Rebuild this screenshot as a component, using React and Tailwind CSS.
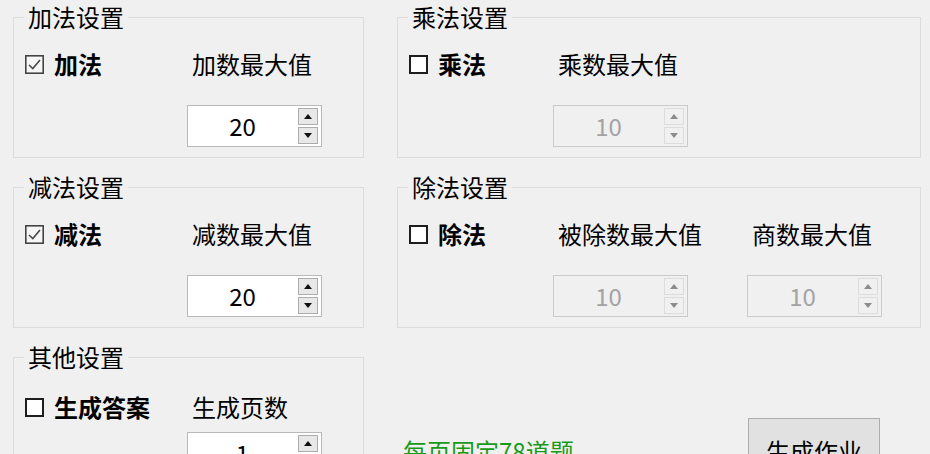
const font = "font-['Noto_Sans_CJK_SC','Noto_Sans',sans-serif]";

function CheckBox({ checked }) {
  if (checked) {
    return (
      <svg width="19" height="19" viewBox="0 0 19 19" className="shrink-0">
        <rect x="0.8" y="0.8" width="17.4" height="17.4" fill="#f6f6f6" stroke="#444" strokeWidth="1.6" />
        <path d="M4 10 L7.8 13.6 L15 5" fill="none" stroke="#4a4a4a" strokeWidth="1.6" />
      </svg>
    );
  }
  return (
    <svg width="19" height="19" viewBox="0 0 19 19" className="shrink-0">
      <rect x="1" y="1" width="17" height="17" fill="#fff" stroke="#1e1e1e" strokeWidth="2" />
    </svg>
  );
}

function Arrow({ up, color }) {
  return (
    <svg width="8" height="5" viewBox="0 0 8 5">
      <path d={up ? "M0 5 L4 0 L8 5 Z" : "M0 0 L4 5 L8 0 Z"} fill={color} />
    </svg>
  );
}

function Spinner({ value, disabled }) {
  const btn = disabled
    ? "bg-[#f0f0f0] border-[#dcdcdc]"
    : "bg-[#e8e8e8] border-[#adadad]";
  const arrow = disabled ? "#8c8c8c" : "#111";
  return (
    <div
      className={`flex h-[42px] w-[135px] border ${
        disabled ? "border-[#cacaca] bg-[#f0f0f0]" : "border-[#b9b9b9] bg-white"
      }`}
    >
      <div
        className={`flex-1 flex items-center justify-center text-[24px] leading-none ${
          disabled ? "text-[#a3a3a3]" : "text-black"
        }`}
      >
        {value}
      </div>
      <div className="w-[20px] ml-[1px] mr-[3px] pt-[2px] flex flex-col gap-[2px]">
        <div className={`h-[17px] border flex items-center justify-center ${btn}`}>
          <Arrow up color={arrow} />
        </div>
        <div className={`h-[17px] border flex items-center justify-center ${btn}`}>
          <Arrow color={arrow} />
        </div>
      </div>
    </div>
  );
}

function Group({ title, children }) {
  return (
    <fieldset className="border border-[#dcdcdc] min-w-0">
      <legend className="ml-[10px] px-[4px] text-[24px] leading-[30px] text-black">{title}</legend>
      {children}
    </fieldset>
  );
}

function Toggle({ checked, label }) {
  return (
    <div className="flex items-center gap-[10px] h-[30px]">
      <CheckBox checked={checked} />
      <span className="text-[24px] leading-[30px] font-bold text-black">{label}</span>
    </div>
  );
}

function Caption({ children }) {
  return <div className="h-[30px] text-[24px] leading-[30px] pl-[5px] text-black whitespace-nowrap">{children}</div>;
}

function LeftGroup({ title, checked, label, caption, value }) {
  return (
    <Group title={title}>
      <div className="pl-[11px] pt-[17px] pb-[10px] grid grid-cols-[162px_135px] gap-y-[26px]">
        <Toggle checked={checked} label={label} />
        <Caption>{caption}</Caption>
        <div />
        <Spinner value={value} />
      </div>
    </Group>
  );
}

export default function App() {
  return (
    <div className={`w-[930px] h-[454px] overflow-hidden bg-[#f0f0f0] pl-[13px] pt-[2px] ${font}`}>
      <div className="grid grid-cols-[351px_524px] gap-x-[33px] gap-y-[14px]">
        <LeftGroup title="加法设置" checked label="加法" caption="加数最大值" value="20" />

        <Group title="乘法设置">
          <div className="pl-[11px] pt-[17px] pb-[10px] grid grid-cols-[144px_135px] gap-y-[26px]">
            <Toggle label="乘法" />
            <Caption>乘数最大值</Caption>
            <div />
            <Spinner value="10" disabled />
          </div>
        </Group>

        <LeftGroup title="减法设置" checked label="减法" caption="减数最大值" value="20" />

        <Group title="除法设置">
          <div className="pl-[11px] pt-[17px] pb-[10px] grid grid-cols-[144px_135px_135px] gap-y-[26px]">
            <Toggle label="除法" />
            <Caption>被除数最大值</Caption>
            <div className="pl-[59px]">
              <Caption>商数最大值</Caption>
            </div>
            <div />
            <Spinner value="10" disabled />
            <div className="pl-[59px]">
              <Spinner value="10" disabled />
            </div>
          </div>
        </Group>

        <Group title="其他设置">
          <div className="pl-[11px] pt-[20px] pb-[10px] grid grid-cols-[162px_135px] gap-y-[10px]">
            <Toggle label="生成答案" />
            <Caption>生成页数</Caption>
            <div />
            <Spinner value="1" />
          </div>
        </Group>

        <div className="grid grid-cols-[351px_132px] items-start">
          <div className="pl-[6px] pt-[94px] text-[24px] leading-[30px] text-[#179a17] whitespace-nowrap">
            每页固定78道题
          </div>
          <button className="mt-[76px] h-[66px] w-[132px] bg-[#e1e1e1] border border-[#adadad] text-[24px] leading-[30px] text-black">
            生成作业
          </button>
        </div>
      </div>
    </div>
  );
}
